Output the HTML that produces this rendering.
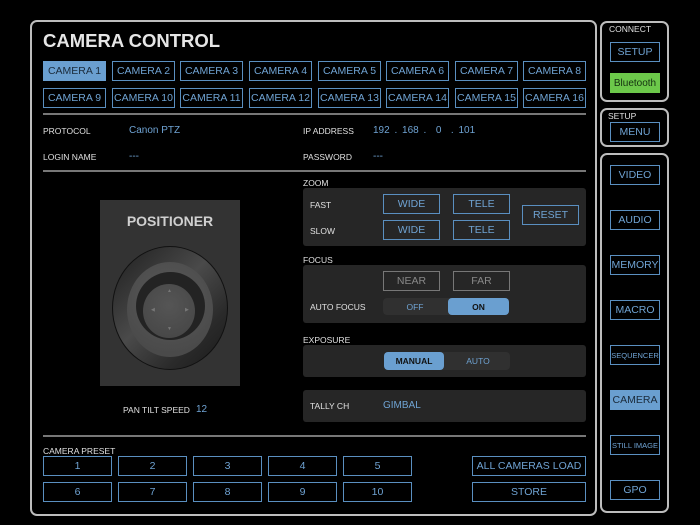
<!DOCTYPE html>
<html><head><meta charset="utf-8"><style>
*{margin:0;padding:0;box-sizing:border-box}
body{width:700px;height:525px;background:#000;font-family:"Liberation Sans",sans-serif;position:relative;overflow:hidden;color:#ddd}
.a{position:absolute}
.p{position:absolute;border:2px solid #bdbdbd;border-radius:7px}
.b{position:absolute;border:1.5px solid #5a8fc0;color:#6fa3d3;font-size:10.5px;display:flex;align-items:center;justify-content:center;height:20px;white-space:nowrap}
.s{background:#6a9fd0;color:#1a2a3a;border-color:#6a9fd0}
.l{position:absolute;font-size:8.5px;color:#e0e0e0}
.v{position:absolute;font-size:10px;color:#6fa3d3}
.hr{position:absolute;height:2px;background:#777;left:43px;width:543px}
.box{position:absolute;background:#262626;border-radius:3px;left:303px;width:283px}
.g{border-color:#777;color:#888}
</style></head><body>
<div class="p" style="left:30px;top:20px;width:567px;height:496px"></div>
<div class="a" style="left:43px;top:30px;font-size:18.5px;font-weight:bold;color:#e6e6e6">CAMERA CONTROL</div>

<div class="b s" style="left:43px;top:61px;width:63px">CAMERA 1</div>
<div class="b" style="left:112px;top:61px;width:63px">CAMERA 2</div>
<div class="b" style="left:180px;top:61px;width:63px">CAMERA 3</div>
<div class="b" style="left:249px;top:61px;width:63px">CAMERA 4</div>
<div class="b" style="left:318px;top:61px;width:63px">CAMERA 5</div>
<div class="b" style="left:386px;top:61px;width:63px">CAMERA 6</div>
<div class="b" style="left:455px;top:61px;width:63px">CAMERA 7</div>
<div class="b" style="left:523px;top:61px;width:63px">CAMERA 8</div>
<div class="b" style="left:43px;top:88px;width:63px">CAMERA 9</div>
<div class="b" style="left:112px;top:88px;width:63px">CAMERA 10</div>
<div class="b" style="left:180px;top:88px;width:63px">CAMERA 11</div>
<div class="b" style="left:249px;top:88px;width:63px">CAMERA 12</div>
<div class="b" style="left:318px;top:88px;width:63px">CAMERA 13</div>
<div class="b" style="left:386px;top:88px;width:63px">CAMERA 14</div>
<div class="b" style="left:455px;top:88px;width:63px">CAMERA 15</div>
<div class="b" style="left:523px;top:88px;width:63px">CAMERA 16</div>

<div class="hr" style="top:113px"></div>
<div class="l" style="left:43px;top:126px">PROTOCOL</div>
<div class="v" style="left:129px;top:125px">Canon PTZ</div>
<div class="l" style="left:43px;top:152px">LOGIN NAME</div>
<div class="v" style="left:129px;top:151px">---</div>
<div class="l" style="left:303px;top:126px">IP ADDRESS</div>
<div class="v" style="left:373px;top:125px;word-spacing:2px">192 . 168 . &nbsp;0 &nbsp;. 101</div>
<div class="l" style="left:303px;top:152px">PASSWORD</div>
<div class="v" style="left:373px;top:151px">---</div>
<div class="hr" style="top:170px"></div>

<div class="a" style="left:100px;top:200px;width:140px;height:186px;background:#333"></div>
<div class="a" style="left:100px;top:213px;width:140px;text-align:center;font-size:14px;font-weight:bold;color:#d0d0d0">POSITIONER</div>
<div class="a" style="left:112px;top:246px;width:116px;height:124px;border-radius:50%;background:linear-gradient(135deg,#1e1e1e,#4a4a4a 45%,#2a2a2a 75%,#1a1a1a);border:1px solid #111"></div>
<div class="a" style="left:127px;top:262px;width:86px;height:95px;border-radius:50%;background:radial-gradient(circle at 50% 40%,#5a5a5a,#4a4a4a 75%)"></div>
<div class="a" style="left:136px;top:272px;width:69px;height:68px;border-radius:50%;background:#232323"></div>
<div class="a" style="left:143px;top:284px;width:52px;height:54px;border-radius:50%;background:radial-gradient(circle at 50% 40%,#555,#444)"></div>
<div class="a" style="left:167px;top:288px;font-size:5px;color:#777">▲</div>
<div class="a" style="left:167px;top:326px;font-size:5px;color:#777">▼</div>
<div class="a" style="left:151px;top:307px;font-size:5px;color:#777">◀</div>
<div class="a" style="left:185px;top:307px;font-size:5px;color:#777">▶</div>
<div class="l" style="left:123px;top:405px">PAN TILT SPEED</div>
<div class="v" style="left:196px;top:404px">12</div>

<div class="l" style="left:303px;top:178px">ZOOM</div>
<div class="box" style="top:188px;height:58px"></div>
<div class="l" style="left:310px;top:200px">FAST</div>
<div class="l" style="left:310px;top:226px">SLOW</div>
<div class="b" style="left:383px;top:194px;width:57px">WIDE</div>
<div class="b" style="left:453px;top:194px;width:57px">TELE</div>
<div class="b" style="left:383px;top:220px;width:57px">WIDE</div>
<div class="b" style="left:453px;top:220px;width:57px">TELE</div>
<div class="b" style="left:522px;top:205px;width:57px">RESET</div>

<div class="l" style="left:303px;top:255px">FOCUS</div>
<div class="box" style="top:265px;height:58px"></div>
<div class="b g" style="left:383px;top:271px;width:57px">NEAR</div>
<div class="b g" style="left:453px;top:271px;width:57px">FAR</div>
<div class="l" style="left:310px;top:302px">AUTO FOCUS</div>
<div class="a" style="left:383px;top:298px;width:126px;height:17px;background:#303030;border-radius:4px"></div>
<div class="a" style="left:383px;top:298px;width:64px;height:17px;font-size:8.5px;color:#6fa3d3;display:flex;align-items:center;justify-content:center">OFF</div>
<div class="a" style="left:448px;top:298px;width:61px;height:17px;background:#6a9fd0;border-radius:4px;font-size:8.5px;color:#111;display:flex;align-items:center;justify-content:center;font-weight:bold">ON</div>

<div class="l" style="left:303px;top:335px">EXPOSURE</div>
<div class="box" style="top:345px;height:32px"></div>
<div class="a" style="left:384px;top:352px;width:126px;height:18px;background:#303030;border-radius:4px"></div>
<div class="a" style="left:384px;top:352px;width:60px;height:18px;background:#6a9fd0;border-radius:4px;font-size:8.5px;color:#111;display:flex;align-items:center;justify-content:center;font-weight:bold">MANUAL</div>
<div class="a" style="left:446px;top:352px;width:64px;height:18px;font-size:8.5px;color:#6fa3d3;display:flex;align-items:center;justify-content:center">AUTO</div>

<div class="box" style="top:390px;height:32px"></div>
<div class="l" style="left:310px;top:401px">TALLY CH</div>
<div class="v" style="left:383px;top:400px">GIMBAL</div>

<div class="hr" style="top:435px"></div>
<div class="l" style="left:43px;top:446px">CAMERA PRESET</div>
<div class="b" style="left:43px;top:456px;width:69px">1</div>
<div class="b" style="left:118px;top:456px;width:69px">2</div>
<div class="b" style="left:193px;top:456px;width:69px">3</div>
<div class="b" style="left:268px;top:456px;width:69px">4</div>
<div class="b" style="left:343px;top:456px;width:69px">5</div>
<div class="b" style="left:43px;top:482px;width:69px">6</div>
<div class="b" style="left:118px;top:482px;width:69px">7</div>
<div class="b" style="left:193px;top:482px;width:69px">8</div>
<div class="b" style="left:268px;top:482px;width:69px">9</div>
<div class="b" style="left:343px;top:482px;width:69px">10</div>
<div class="b" style="left:472px;top:456px;width:114px">ALL CAMERAS LOAD</div>
<div class="b" style="left:472px;top:482px;width:114px">STORE</div>

<div class="p" style="left:600px;top:21px;width:69px;height:81px"></div>
<div class="l" style="left:609px;top:24px;font-size:8.5px">CONNECT</div>
<div class="b" style="left:610px;top:42px;width:50px">SETUP</div>
<div class="a" style="left:610px;top:73px;width:50px;height:20px;background:#6cc84a;color:#143010;font-size:10px;display:flex;align-items:center;justify-content:center">Bluetooth</div>
<div class="p" style="left:600px;top:108px;width:69px;height:39px"></div>
<div class="l" style="left:608px;top:111px">SETUP</div>
<div class="b" style="left:610px;top:122px;width:50px">MENU</div>
<div class="p" style="left:600px;top:153px;width:69px;height:360px"></div>
<div class="b" style="left:610px;top:165px;width:50px">VIDEO</div>
<div class="b" style="left:610px;top:210px;width:50px">AUDIO</div>
<div class="b" style="left:610px;top:255px;width:50px">MEMORY</div>
<div class="b" style="left:610px;top:300px;width:50px">MACRO</div>
<div class="b" style="left:610px;top:345px;width:50px;font-size:7.5px">SEQUENCER</div>
<div class="b s" style="left:610px;top:390px;width:50px">CAMERA</div>
<div class="b" style="left:610px;top:435px;width:50px;font-size:7.5px">STILL IMAGE</div>
<div class="b" style="left:610px;top:480px;width:50px">GPO</div>
</body></html>
